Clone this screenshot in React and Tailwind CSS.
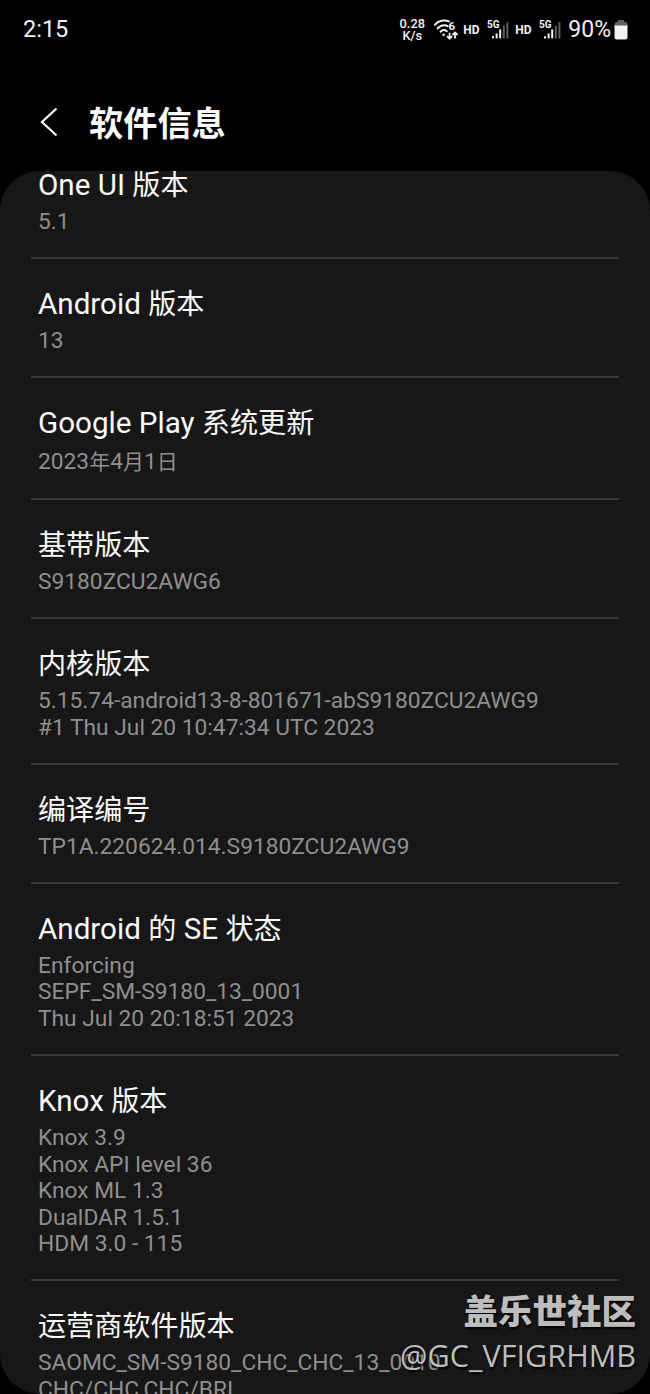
import React from "react";

const items = [
  { title: "One UI 版本", lines: ["5.1"] },
  { title: "Android 版本", lines: ["13"] },
  { title: "Google Play 系统更新", lines: ["2023年4月1日"], tall: true },
  { title: "基带版本", lines: ["S9180ZCU2AWG6"] },
  {
    title: "内核版本",
    lines: [
      "5.15.74-android13-8-801671-abS9180ZCU2AWG9",
      "#1 Thu Jul 20 10:47:34 UTC 2023",
    ],
  },
  { title: "编译编号", lines: ["TP1A.220624.014.S9180ZCU2AWG9"] },
  {
    title: "Android 的 SE 状态",
    lines: ["Enforcing", "SEPF_SM-S9180_13_0001", "Thu Jul 20 20:18:51 2023"],
  },
  {
    title: "Knox 版本",
    lines: [
      "Knox 3.9",
      "Knox API level 36",
      "Knox ML 1.3",
      "DualDAR 1.5.1",
      "HDM 3.0 - 115",
    ],
  },
  {
    title: "运营商软件版本",
    lines: ["SAOMC_SM-S9180_CHC_CHC_13_0010", "CHC/CHC,CHC/BRI"],
  },
];

// Chinese glyphs are set a little smaller than the latin ones
const MixedText = ({ text, cjkClass }) =>
  text.split(/([\u4e00-\u9fff]+)/).map((part, i) =>
    i % 2 ? (
      <span key={i} className={cjkClass}>
        {part}
      </span>
    ) : (
      part
    )
  );

const WifiIcon = () => (
  <svg width="26" height="24" viewBox="0 0 26 24" fill="none">
    <g stroke="#f2f2f2" strokeWidth="2" strokeLinecap="round">
      <path d="M0.8 6.8C4.4 2.4 10.6 1.4 15 3.4" />
      <path d="M3.6 10.4C6.2 7.4 10.4 6.6 13.6 8" />
      <path d="M6.6 13.8C8.4 11.9 11 11.8 12.8 13.2" />
    </g>
    <circle cx="9.6" cy="16.8" r="1.3" fill="#f2f2f2" />
    <g stroke="#f2f2f2" strokeWidth="1.8">
      <path d="M15.6 14.8v6M13 18.2l2.6 2.6 2.6-2.6" />
      <path d="M21 20.4v-6M18.4 17l2.6-2.6 2.6 2.6" />
    </g>
    <text
      x="14.6"
      y="11.6"
      fill="#f2f2f2"
      fontFamily="Roboto, sans-serif"
      fontSize="11.5"
      fontWeight="700"
    >
      6
    </text>
  </svg>
);

const SignalIcon = () => (
  <svg width="24" height="24" viewBox="0 0 24 24">
    <text
      x="0"
      y="10"
      fill="#f2f2f2"
      fontFamily="Roboto, sans-serif"
      fontSize="10"
      fontWeight="700"
      textLength="12.5"
    >
      5G
    </text>
    <rect x="5" y="18.2" width="2" height="2.2" fill="#f2f2f2" />
    <rect x="8.6" y="15.4" width="2" height="5" fill="#f2f2f2" />
    <rect x="12.2" y="11.4" width="2" height="9" fill="#f2f2f2" />
    <rect x="15.8" y="7.6" width="2" height="12.8" fill="#606060" />
    <rect x="19.4" y="4.4" width="2" height="16" fill="#606060" />
  </svg>
);

const BatteryIcon = () => (
  <svg width="14" height="20" viewBox="0 0 14 20">
    <path d="M4 0h6v2h1.5a2 2 0 0 1 2 2v3H.5V4a2 2 0 0 1 2-2H4z" fill="#606060" />
    <path d="M.5 5.5h13V17a2.5 2.5 0 0 1-2.5 2.5H3A2.5 2.5 0 0 1 .5 17z" fill="#f2f2f2" />
  </svg>
);

const StatusBar = () => (
  <div className="flex h-[58px] shrink-0 items-center justify-between pl-[23px] pr-[22px] pt-[2px] text-[#f2f2f2]">
    <span className="text-[23.5px]">2:15</span>
    <div className="flex items-center">
      <div className="mr-[9px] w-[26px] whitespace-nowrap text-center text-[12.8px] font-medium leading-[12px]">
        <div>0.28</div>
        <div>K/s</div>
      </div>
      <WifiIcon />
      <span className="ml-[3px] w-[24px] text-[12px] font-bold">HD</span>
      <SignalIcon />
      <span className="ml-[4px] w-[24px] text-[12px] font-bold">HD</span>
      <SignalIcon />
      <span className="ml-[5px] mr-[3px] text-[23px]">90%</span>
      <BatteryIcon />
    </div>
  </div>
);

const Item = ({ title, lines, tall }) => (
  <div className="shrink-0 border-b-2 border-[#393939] px-[7px] pb-[21.7px] pt-[26px] text-[#fafafa]">
    <div className="h-[42.8px] whitespace-nowrap text-[29.6px] leading-[38px]">
      <MixedText text={title} cjkClass="text-[28.1px]" />
    </div>
    <div
      className={
        tall
          ? "pt-[1px] text-[22.75px] leading-[28.5px] text-[#8f8f8f]"
          : "text-[22.75px] leading-[26.55px] text-[#8f8f8f]"
      }
    >
      {lines.map((line) => (
        <div key={line} className="whitespace-nowrap">
          <MixedText text={line} cjkClass="text-[21px]" />
        </div>
      ))}
    </div>
  </div>
);

const App = () => {
  return (
    <div className="relative flex h-[1394px] w-[650px] flex-col overflow-hidden bg-black font-['Roboto','Noto_Sans_CJK_SC',sans-serif]">
      <StatusBar />

      <header className="flex h-[113px] shrink-0 items-center pl-[40px] pt-[14px]">
        <svg width="19" height="30" viewBox="0 0 19 30" fill="none">
          <path d="M16.5 1.5L2 15l14.5 13.5" stroke="#fafafa" strokeWidth="2.2" />
        </svg>
        <h1 className="ml-[30px] pt-[5px] text-[34.2px] font-bold leading-none text-[#fafafa]">
          软件信息
        </h1>
      </header>

      <main className="flex min-h-0 flex-1 flex-col overflow-hidden rounded-[40px] bg-[#171717] px-[31px]">
        <div className="-mt-[30.6px] flex flex-col">
          {items.map((item) => (
            <Item key={item.title} {...item} />
          ))}
        </div>
      </main>

      <div className="absolute bottom-0 right-[14px] flex h-[107px] flex-col items-end whitespace-nowrap text-[#bdbdbd] [text-shadow:1px_2px_2px_#000]">
        <div className="h-[45px] text-[34.5px] font-black leading-[50px]">
          盖乐世社区
        </div>
        <div className="font-['Open_Sans',sans-serif] text-[30.6px] leading-[46px]">
          @GC_VFIGRHMB
        </div>
      </div>
    </div>
  );
};

export default App;
